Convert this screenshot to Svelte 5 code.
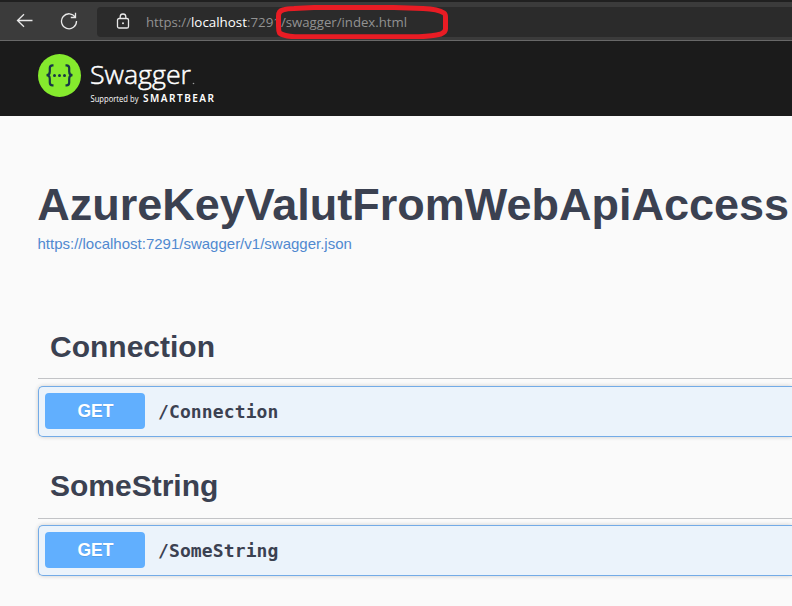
<script>
  const groups = [
    { name: 'Connection', method: 'GET', path: '/Connection' },
    { name: 'SomeString', method: 'GET', path: '/SomeString' }
  ];
</script>

<div class="page">
  <header class="browser">
    <svg class="back" width="18" height="16" viewBox="0 0 18 16"><path d="M16.500 7.500H1.500M8 1.200L1.500 7.500L8 13.800" /></svg>
    <svg class="reload" width="18" height="18" viewBox="0 0 18 18"><path d="M15.500 5.500A7.500 7.500 0 1 0 16.500 9M15.500 .8V5.500H10.800" /></svg>
    <div class="address">
      <svg class="lock" width="14" height="17" viewBox="0 0 14 17">
        <rect x="1.500" y="5.500" width="11" height="9.500" rx="1.600" />
        <path d="M4.200 5.500V3.800A2.800 2.800 0 0 1 9.800 3.800V5.500" />
        <circle cx="7" cy="10.300" r="1" />
      </svg>
      <svg class="url" width="270" height="24">
        <text x="0" y="17" textLength="45" lengthAdjust="spacingAndGlyphs">https://</text>
        <text class="host" x="45" y="17" textLength="56" lengthAdjust="spacingAndGlyphs">localhost</text>
        <text x="101" y="17" textLength="34" lengthAdjust="spacingAndGlyphs">:7291</text>
        <text x="135" y="17" textLength="126" lengthAdjust="spacingAndGlyphs">/swagger/index.html</text>
      </svg>
    </div>
    <svg class="marker" width="176" height="36" viewBox="0 0 176 36">
      <path d="M20 5.500L40 4.500H120L149 5.500Q164 6 170 10Q171.500 11 171.500 14V26Q171.500 29 167 31Q159 33 145 33.800H21Q9 33 5.500 30Q4.500 28 4.500 23V13Q4.500 8 9 7Q13 5.500 20 5.500Z" />
    </svg>
  </header>

  <div class="topbar">
    <svg width="190" height="60" viewBox="0 0 190 60">
      <circle cx="21.500" cy="24.500" r="21.500" fill="#85ea2d" />
      <g fill="none" stroke="#173647" stroke-width="2.200">
        <path d="M15.500 14.300H14.500Q11.800 14.300 11.800 17V20.500Q11.800 24.200 8.500 24.200Q11.800 24.200 11.800 28V31.500Q11.800 34.300 14.500 34.300H15.500" />
        <path d="M27.500 14.300H28.500Q31.200 14.300 31.200 17V20.500Q31.200 24.200 34.500 24.200Q31.200 24.200 31.200 28V31.500Q31.200 34.300 28.500 34.300H27.500" />
      </g>
      <g fill="#173647"><circle cx="16.500" cy="24.500" r="1.500" /><circle cx="21.500" cy="24.500" r="1.500" /><circle cx="26.500" cy="24.500" r="1.500" /></g>
      <text class="brand" x="52" y="33" textLength="101" lengthAdjust="spacingAndGlyphs">Swagger</text>
      <circle cx="155.500" cy="32.500" r=".8" fill="#999" />
      <text class="support" x="52.500" y="51" textLength="48" lengthAdjust="spacingAndGlyphs">Supported by</text>
      <text class="bear" x="105" y="51" textLength="71" lengthAdjust="spacing">SMARTBEAR</text>
    </svg>
  </div>

  <main>
    <h1>AzureKeyValutFromWebApiAccess</h1>
    <span class="spec">https://localhost:7291/swagger/v1/swagger.json</span>
    <div class="groups">
      {#each groups as g}
        <section>
          <h3>{g.name}</h3>
          <div class="op">
            <span class="method">{g.method}</span>
            <span class="path">{g.path}</span>
          </div>
        </section>
      {/each}
    </div>
  </main>
</div>

<style>
  :global(body) { margin: 0; background: #fafafa; }
  .page { width: 792px; height: 606px; overflow: hidden; background: #fafafa; color: #3b4151; font-family: "Liberation Sans", sans-serif; }
  .browser { position: relative; box-sizing: border-box; height: 41px; display: flex; align-items: center; padding-left: 16px; background: #3b3b3b; border-top: 2px solid #202020; border-bottom: 1px solid #686868; }
  .browser svg { fill: none; stroke: #e8e8e8; stroke-width: 1.300; flex: none; }
  .reload { margin-left: 26px; }
  .address { margin-left: 19px; flex: 1; height: 30px; margin-top: 1px; display: flex; align-items: center; background: #2b2b2b; border-radius: 4px 0 0 4px; }
  .lock { margin-left: 19px; }
  .browser .lock circle { fill: #e8e8e8; stroke: none; }
  .browser .url { margin-left: 16px; stroke: none; fill: #929292; font: 13.500px "Open Sans", sans-serif; }
  .url .host { fill: #fff; }
  .browser .marker { position: absolute; left: 274px; top: 1px; stroke: #e91c24; stroke-width: 5; stroke-linejoin: round; }
  .topbar { box-sizing: border-box; height: 75px; padding: 10px 0 0 38px; background: #1b1b1b; }
  .topbar svg { display: block; }
  .topbar text { fill: #fff; font-family: "Open Sans", sans-serif; }
  .topbar .brand { font-size: 26.500px; font-weight: 300; stroke: #fff; stroke-width: .5; }
  .topbar .support { font-size: 8.300px; }
  .topbar .bear { font-family: "Noto Sans", sans-serif; font-size: 10px; font-weight: 600; }
  main { padding: 63px 0 0 38px; }
  h1 { margin: 0 0 0 -.8px; font-size: 45px; line-height: 52px; white-space: nowrap; }
  .spec { display: block; margin: 4px 0 0 -.5px; font-size: 15px; line-height: 18px; color: #5089d0; }
  .groups { padding-top: 64px; }
  section { height: 139px; }
  h3 { box-sizing: border-box; height: 62px; margin: 0 0 7px; padding: 13px 12px 0; font-size: 30px; line-height: 34px; border-bottom: 1px solid #c2c3c6; }
  section + section h3 { height: 63px; margin-bottom: 6px; }
  .op { box-sizing: border-box; height: 51px; display: flex; align-items: center; padding-left: 6px; background: #ebf3fb; border: 1px solid #73abe7; border-right: 0; border-radius: 5px 0 0 5px; box-shadow: 0 0 4px rgba(0,0,0,.19); }
  .method { width: 100px; height: 36px; margin-bottom: 1px; border-radius: 4px; background: #61affe; color: #fff; font-size: 17.500px; font-weight: 700; line-height: 36px; text-align: center; text-indent: 1px; text-shadow: 0 1px 0 rgba(0,0,0,.1); }
  .path { margin-left: 13px; font: bold 18px "DejaVu Sans Mono", monospace; letter-spacing: .12px; }
</style>
